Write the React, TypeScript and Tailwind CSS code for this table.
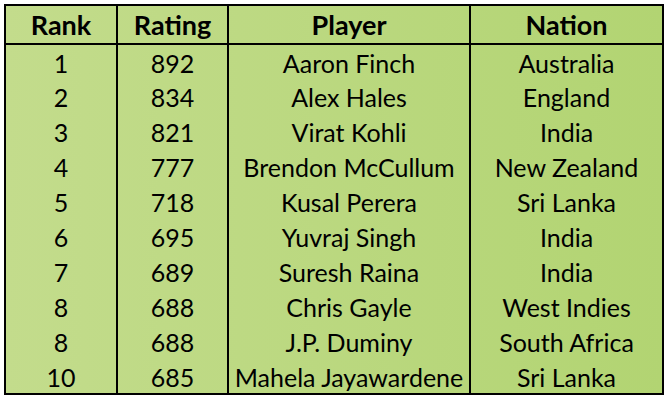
const rows = [
  ['1', '892', 'Aaron Finch', 'Australia'],
  ['2', '834', 'Alex Hales', 'England'],
  ['3', '821', 'Virat Kohli', 'India'],
  ['4', '777', 'Brendon McCullum', 'New Zealand'],
  ['5', '718', 'Kusal Perera', 'Sri Lanka'],
  ['6', '695', 'Yuvraj Singh', 'India'],
  ['7', '689', 'Suresh Raina', 'India'],
  ['8', '688', 'Chris Gayle', 'West Indies'],
  ['8', '688', 'J.P. Duminy', 'South Africa'],
  ['10', '685', 'Mahela Jayawardene', 'Sri Lanka'],
];

export default function App() {
  return (
    <div className="w-[672px] h-[402px] bg-white pl-[4px] pt-[4px] font-['Lato',sans-serif] text-black">
      <table className="w-[660px] table-fixed border-collapse border-2 border-black bg-gradient-to-r from-[#c3dc8c] to-[#b2d472] text-[25px] leading-none">
        <colgroup>
          <col className="w-[112px]" />
          <col className="w-[111px]" />
          <col className="w-[242px]" />
          <col className="w-[193px]" />
        </colgroup>
        <thead>
          <tr className="h-[39px] font-bold text-[27px]">
            <th className="border-2 border-black text-center">Rank</th>
            <th className="border-2 border-black text-center">Rating</th>
            <th className="border-2 border-black text-center">Player</th>
            <th className="border-2 border-black text-center">Nation</th>
          </tr>
        </thead>
        <tbody>
          {rows.map((r, i) => (
            <tr key={i} className="h-[35px]">
              <td className="border-x-2 border-black text-center pt-[2px]">{r[0]}</td>
              <td className="border-x-2 border-black text-center pt-[2px]">{r[1]}</td>
              <td className="border-x-2 border-black text-center pt-[2px]">{r[2]}</td>
              <td className="border-x-2 border-black text-center pt-[2px]">{r[3]}</td>
            </tr>
          ))}
        </tbody>
      </table>
    </div>
  );
}
